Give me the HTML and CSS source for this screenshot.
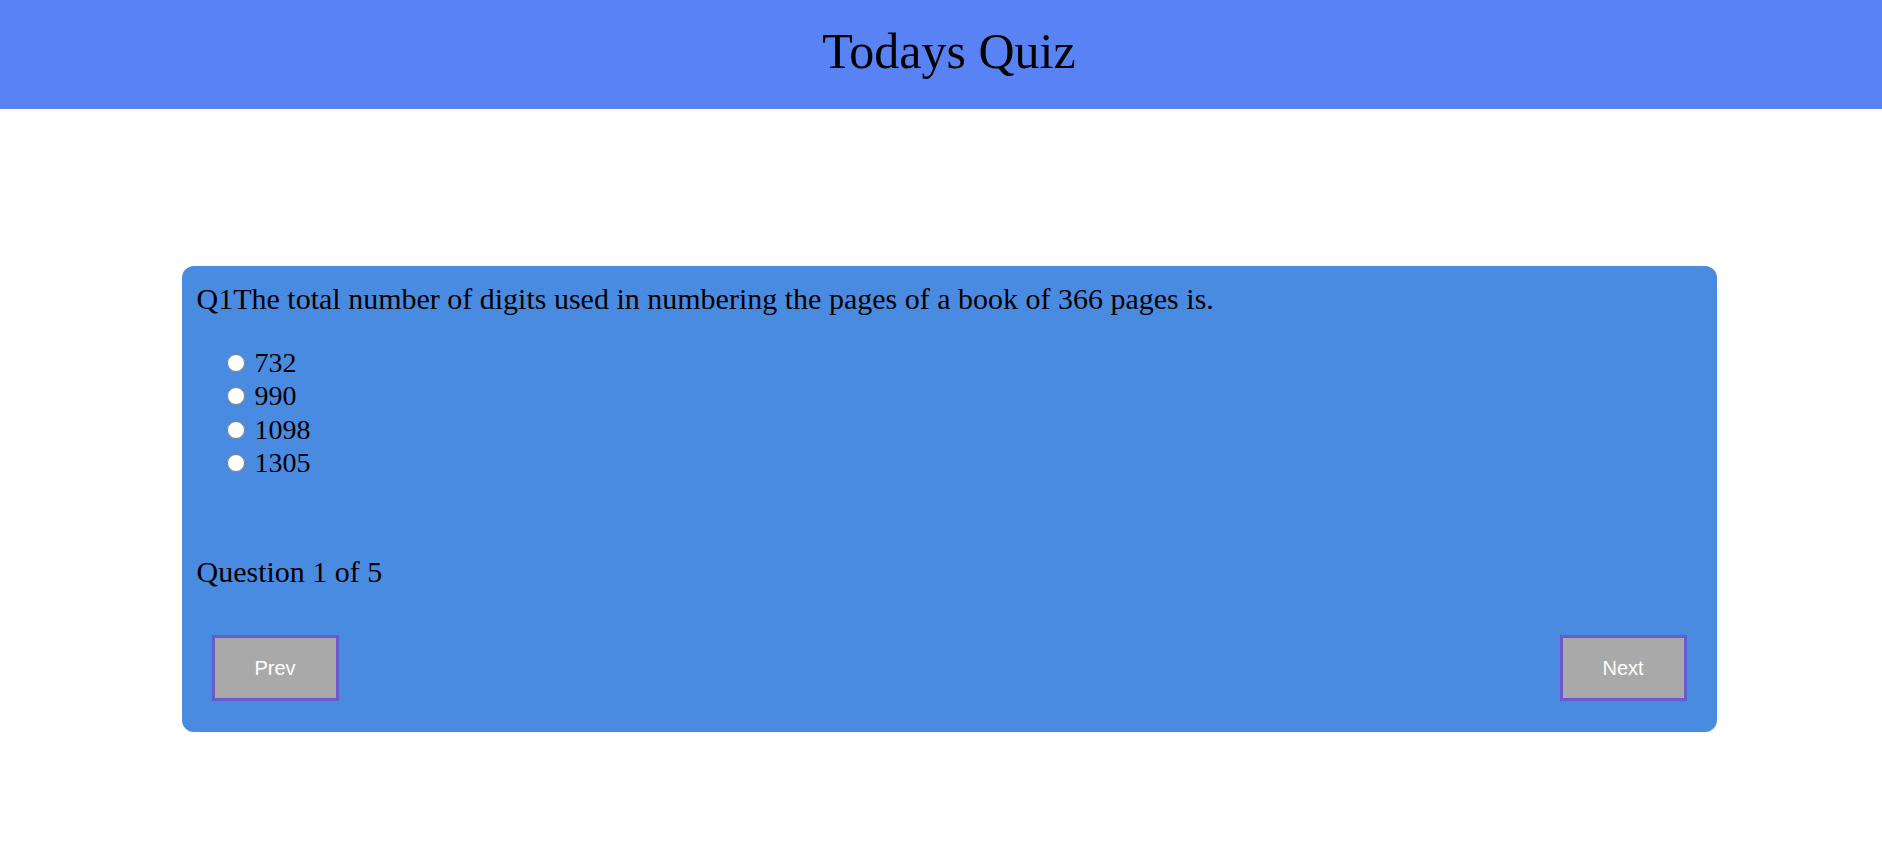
FILE: index.html
```html
<!DOCTYPE html>
<html lang="en">
<head>
<meta charset="utf-8">
<title>Todays Quiz</title>
<link rel="stylesheet" href="styles.css">
</head>
<body>
<header class="header">
  <h1 class="title">Todays Quiz</h1>
</header>
<main class="main">
  <section class="card">
    <p class="question">Q1The total number of digits used in numbering the pages of a book of 366 pages is.</p>
    <ul class="options">
      <li class="option"><label><input type="radio" name="q1" class="radio"> 732</label></li>
      <li class="option"><label><input type="radio" name="q1" class="radio"> 990</label></li>
      <li class="option"><label><input type="radio" name="q1" class="radio"> 1098</label></li>
      <li class="option"><label><input type="radio" name="q1" class="radio"> 1305</label></li>
    </ul>
    <p class="progress">Question 1 of 5</p>
    <div class="nav">
      <button class="btn">Prev</button>
      <button class="btn">Next</button>
    </div>
  </section>
</main>
</body>
</html>
```
FILE: styles.css
```css
html, body {
  margin: 0;
  padding: 0;
  background: #ffffff;
}
body {
  font-family: "Liberation Serif", "Times New Roman", serif;
  color: #000;
}
.header {
  background: #5983f5;
  height: 109px;
  box-sizing: border-box;
  padding: 22px 0 0 16px;
  text-align: center;
}
.title {
  margin: 0;
  font-size: 50px;
  font-weight: normal;
  line-height: normal;
}
.main {
  display: flex;
  justify-content: center;
  padding: 157px 0 0 16px;
}
.card {
  width: 1535px;
  box-sizing: border-box;
  background: #4a8be2;
  border-radius: 12px;
  padding: 16px 30px 31px 15px;
}
.question {
  margin: 0;
  font-size: 30px;
  line-height: normal;
}
.options {
  list-style: none;
  margin: 30px 0 0 0;
  padding: 0 0 0 24px;
}
.option {
  font-size: 28px;
  line-height: 33.33px;
}
.radio {
  width: 18px;
  height: 18px;
  margin: 0 3px 3px 6px;
  vertical-align: baseline;
}
.progress {
  margin: 76px 0 0 0;
  font-size: 30px;
  line-height: normal;
}
.nav {
  margin-top: 46px;
  display: flex;
  justify-content: space-between;
  padding-left: 15px;
}
.btn {
  width: 127px;
  height: 66px;
  box-sizing: border-box;
  background: #a9a9a9;
  border: 3px solid #6a5acd;
  color: #ffffff;
  font-family: "Liberation Sans", Arial, sans-serif;
  font-size: 20px;
  padding: 0;
}
```
